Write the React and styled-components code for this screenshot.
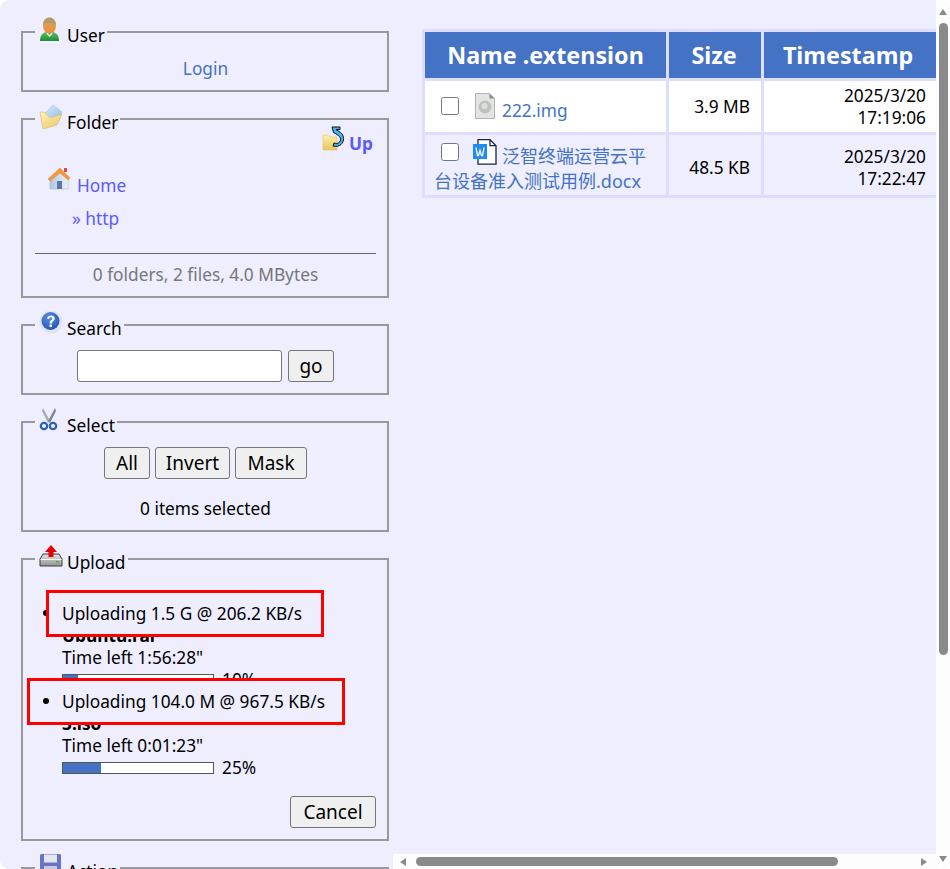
import React from "react";
import styled, { createGlobalStyle } from "styled-components";

const GlobalStyle = createGlobalStyle`
  html, body {
    margin: 0;
    padding: 0;
    height: 869px;
    overflow: hidden;
    background: #ffffff;
  }
  body {
    font-family: "Noto Sans", "Noto Sans CJK SC", sans-serif;
    font-size: 17.3px;
    color: #000;
  }
`;

const Shell = styled.div`
  width: 950px;
  height: 869px;
  display: flex;
  overflow: hidden;
  border-radius: 9px;
  background: #eeeeff;
`;

const Sidebar = styled.div`
  width: 368px;
  height: 869px;
  padding: 21px 4px 0 21px;
  box-sizing: content-box;
  flex: none;
  display: flex;
  flex-direction: column;
  gap: 16px;
  overflow: hidden;
`;

const Panel = styled.fieldset`
  margin: 0;
  padding: ${(p) => p.$pad || "14px 11px 11px 12px"};
  border: 2px solid #999999;
  min-width: 0;
  flex: none;
  box-sizing: border-box;
  width: 368px;
  text-align: center;
  line-height: 22px;
`;

const Legend = styled.legend`
  margin-left: 0;
  padding: 0 2px 0 4px;
  height: 22px;
  line-height: 22px;
  display: flex;
  align-items: flex-start;
  gap: 8px;
  text-align: left;
`;

const LegendLabel = styled.span`
  margin-top: 4px;
`;

const LegendIcon = styled.span`
  width: 20px;
  height: 24px;
  margin-top: -4px;
  display: block;
  svg {
    display: block;
  }
`;

const Link = styled.a`
  color: ${(p) => p.$color || "#4472c4"};
  font-weight: ${(p) => (p.$bold ? 700 : 400)};
  font-size: ${(p) => p.$size || "inherit"};
  text-decoration: none;
`;

const UpRow = styled.div`
  height: 30px;
  margin-top: -16px;
  padding-right: 3px;
  display: flex;
  justify-content: flex-end;
  align-items: flex-start;
  gap: 3px;
`;

const UpLink = styled(Link)`
  margin-top: 7px;
`;

const Crumbs = styled.div`
  margin-top: 16px;
  padding-left: 12px;
  text-align: left;
`;

const HomeRow = styled.div`
  height: 24px;
  display: flex;
  gap: 6px;
  align-items: flex-end;
  line-height: 20px;
`;

const HomeIconBox = styled.span`
  align-self: flex-start;
  margin-top: -5px;
  height: 24px;
`;

const SubCrumb = styled.div`
  margin-top: 12px;
  padding-left: 25px;
  height: 22px;
`;

const Rule = styled.hr`
  margin: 23px 0 0 0;
  border: 0;
  height: 1px;
  background: #666666;
`;

const Summary = styled.div`
  margin-top: 10px;
  color: #777777;
`;

const Row = styled.div`
  display: flex;
  justify-content: center;
  gap: ${(p) => p.$gap || "6px"};
`;

const SearchInput = styled.input`
  width: 205px;
  height: 32px;
  box-sizing: border-box;
  border: 1px solid #767676;
  border-radius: 3px;
  background: #fff;
`;

const Button = styled.button`
  height: 32px;
  width: ${(p) => p.$w}px;
  padding: 0;
  box-sizing: border-box;
  border: 1px solid #767676;
  border-radius: 3px;
  background: #efefef;
  color: #000;
  font: inherit;
  font-size: 19px;
`;

const Selected = styled.div`
  margin-top: 19px;
  margin-bottom: -1px;
`;

const UploadList = styled.ul`
  margin: 0;
  padding: 19px 0 0 27px;
  list-style: none;
  text-align: left;
`;

const Upload = styled.li`
  display: block;
`;

const FirstLine = styled.div`
  position: relative;
  height: 22px;
`;

const Bullet = styled.span`
  position: absolute;
  left: -19px;
  top: 7px;
  width: 6px;
  height: 6px;
  border-radius: 50%;
  background: #000;
  z-index: ${(p) => (p.$over ? 2 : 0)};
`;

const RedBox = styled.div`
  position: absolute;
  left: ${(p) => p.$left}px;
  top: -13px;
  width: ${(p) => p.$w}px;
  height: 47px;
  box-sizing: border-box;
  border: 3px solid #ff0000;
  background: #eeeeff;
  z-index: 1;
`;

const LineText = styled.span`
  position: relative;
  z-index: 2;
`;

const FileName = styled.div`
  font-weight: 700;
  height: 22px;
`;

const TimeLeft = styled.div`
  height: 22px;
`;

const BarRow = styled.div`
  height: 22px;
  display: flex;
  align-items: center;
  gap: 8px;
`;

const Bar = styled.div`
  width: 152px;
  height: 12px;
  margin-top: -1px;
  box-sizing: border-box;
  border: 1px solid #555555;
  background: #ffffff;
`;

const BarFill = styled.div`
  height: 100%;
  background: #4472c4;
`;

const CancelRow = styled.div`
  margin-top: 17px;
  display: flex;
  justify-content: flex-end;
`;

const Main = styled.div`
  flex: 1;
  min-width: 0;
  display: grid;
  grid-template-columns: 543px 14px;
  grid-template-rows: 854px 15px;
`;

const TableArea = styled.div`
  overflow: hidden;
  padding: 29px 0 0 29px;
`;

const FileTable = styled.table`
  border-collapse: separate;
  border-spacing: 3px;
  background: #ddddff;
  table-layout: fixed;
  width: 517px;
`;

const HeadCell = styled.th`
  box-sizing: border-box;
  height: 46px;
  padding: 0 ${(p) => p.$pr || 0}px 0 0;
  background: #4472c4;
  color: #ffffff;
  font-size: 23.3px;
  font-weight: 700;
  text-align: center;
  width: ${(p) => p.$w}px;
`;

const NameCell = styled.td`
  padding: 4px 8px 1px 9px;
  background: ${(p) => (p.$alt ? "#eeeeff" : "#ffffff")};
  line-height: 24px;
`;

const ValueCell = styled.td`
  padding: ${(p) => (p.$alt ? "6px" : "4px")} ${(p) => p.$pr}px ${(p) => (p.$alt ? "1px" : "3px")} 0;
  background: ${(p) => (p.$alt ? "#eeeeff" : "#ffffff")};
  text-align: right;
  line-height: 22px;
  vertical-align: middle;
`;

const Check = styled.input`
  width: 18px;
  height: 18px;
  margin: 0 14px 0 7px;
  vertical-align: 2px;
`;

const FileIcon = styled.span`
  display: inline-block;
  width: 24px;
  height: 26px;
  margin-right: 5px;
  vertical-align: -2px;
  svg {
    display: block;
  }
`;

const Track = styled.div`
  background: #fdfdfd;
  display: flex;
  flex-direction: ${(p) => (p.$vertical ? "column" : "row")};
  align-items: center;
`;

const Thumb = styled.div`
  background: #8a8a8a;
  border-radius: 5px;
  flex: none;
  width: ${(p) => (p.$vertical ? "9px" : `${p.$size}px`)};
  height: ${(p) => (p.$vertical ? `${p.$size}px` : "9px")};
  margin: ${(p) => p.$margin};
`;

const Arrow = styled.div`
  flex: none;
  width: 0;
  height: 0;
  margin: ${(p) => p.$margin || 0};
  border-style: solid;
  border-color: transparent;
  border-width: ${(p) => (p.$dir === "up" || p.$dir === "down" ? "0 4.5px" : "4.5px 0")};
  ${(p) => p.$dir === "up" && "border-bottom: 6px solid #8a8a8a;"}
  ${(p) => p.$dir === "down" && "border-top: 6px solid #8a8a8a;"}
  ${(p) => p.$dir === "left" && "border-right: 6px solid #8a8a8a;"}
  ${(p) => p.$dir === "right" && "border-left: 6px solid #8a8a8a;"}
`;

const UserIcon = () => (
  <svg width="21" height="25" viewBox="0 0 21 25">
    <defs>
      <linearGradient id="skin" x1="0" y1="0" x2="0" y2="1">
        <stop offset="0" stopColor="#c9a878" />
        <stop offset="1" stopColor="#f78a2c" />
      </linearGradient>
      <linearGradient id="suit" x1="0" y1="0" x2="0" y2="1">
        <stop offset="0" stopColor="#5cc06a" />
        <stop offset="1" stopColor="#1f8a35" />
      </linearGradient>
    </defs>
    <path d="M1 24c0-5 2-8 6-9h7c4 1 6 4 6 9z" fill="url(#suit)" />
    <path d="M8 15l2.500 3 2.500-3 .5 2-3 3-3-3z" fill="#d7efd8" />
    <ellipse cx="10.500" cy="9" rx="6.500" ry="7.500" fill="url(#skin)" />
    <path d="M4 8c0-5 3-7.500 6.500-7.500S17 3 17 8c-2-2-10-3-13 0z" fill="#b59a62" />
  </svg>
);

const FolderOpenIcon = () => (
  <svg width="24" height="26" viewBox="0 0 24 26">
    <defs>
      <linearGradient id="sheet" x1="0" y1="0" x2="1" y2="1">
        <stop offset="0" stopColor="#d8ecfa" />
        <stop offset="1" stopColor="#8fbde0" />
      </linearGradient>
      <linearGradient id="flap" x1="0" y1="0" x2="1" y2="1">
        <stop offset="0" stopColor="#fff3b8" />
        <stop offset="1" stopColor="#e8c468" />
      </linearGradient>
    </defs>
    <path d="M5 10L14 1l9 7-3 9z" fill="url(#sheet)" stroke="#a9c6dc" strokeWidth=".6" />
    <path d="M1 8l4 0 6 6 12-4-5 11-14 4z" fill="url(#flap)" stroke="#d8b868" strokeWidth=".6" />
  </svg>
);

const UpIcon = () => (
  <svg width="24" height="25" viewBox="0 0 24 25">
    <defs>
      <linearGradient id="upfolder" x1="0" y1="0" x2="0" y2="1">
        <stop offset="0" stopColor="#fff0a8" />
        <stop offset="1" stopColor="#e6c65e" />
      </linearGradient>
    </defs>
    <path d="M1 9h5l2 2h7v13H1z" fill="url(#upfolder)" stroke="#dcc06a" strokeWidth=".6" />
    <path
      d="M10 1h8v2.500h-4l4.500 3c4 3 4 9 .5 12-2 1.800-5 2.300-8 1.500l1-3c3 1 6 .3 6.500-3 .5-2.800-1.500-4.500-7-7.500z"
      fill="#44b4e8"
      stroke="#0c0c20"
      strokeWidth="1"
    />
  </svg>
);

const HomeIcon = () => (
  <svg width="24" height="24" viewBox="0 0 24 24">
    <defs>
      <linearGradient id="wall" x1="0" y1="0" x2="1" y2="0">
        <stop offset="0" stopColor="#a9c8e2" />
        <stop offset="1" stopColor="#eef3f8" />
      </linearGradient>
    </defs>
    <path d="M3 11l10-7 8 8v10H3z" fill="url(#wall)" stroke="#a7bccf" strokeWidth=".6" />
    <path d="M1 12L13 1l10 10-2 2-8-7-10 8z" fill="#f6973c" stroke="#e9852c" strokeWidth=".5" />
    <rect x="17" y="1" width="3" height="4" fill="#d9504a" />
    <rect x="10" y="14" width="5" height="8" fill="#5b78a8" />
  </svg>
);

const HelpIcon = () => (
  <svg width="24" height="24" viewBox="0 0 24 24">
    <defs>
      <radialGradient id="orb" cx=".4" cy=".3" r=".8">
        <stop offset="0" stopColor="#5c8fe0" />
        <stop offset="1" stopColor="#1d4fb4" />
      </radialGradient>
    </defs>
    <circle cx="12" cy="12" r="11.500" fill="#dfe4ee" />
    <circle cx="11.500" cy="11" r="9" fill="url(#orb)" />
    <path
      d="M8 8.500c.5-2 2-3 4-3s3.700 1.200 3.700 3c0 2.700-2.700 2.600-2.700 5h-2.400c0-3.300 2.600-3.300 2.600-5 0-.8-.6-1.200-1.300-1.200-1 0-1.400.6-1.700 1.500z"
      fill="#fff"
    />
    <rect x="10.500" y="14.500" width="2.500" height="2.500" fill="#fff" />
  </svg>
);

const ScissorsIcon = () => (
  <svg width="20" height="24" viewBox="0 0 20 24">
    <path d="M4 1l7 13-2 2L3 4z" fill="#a7adb8" />
    <path d="M16 1L9 14l2 2 6-12z" fill="#7f8793" />
    <circle cx="5" cy="19" r="3.200" fill="none" stroke="#2a62b8" strokeWidth="2.200" />
    <circle cx="14" cy="19" r="3.200" fill="none" stroke="#2a62b8" strokeWidth="2.200" />
  </svg>
);

const UploadIcon = () => (
  <svg width="24" height="24" viewBox="0 0 24 24">
    <defs>
      <linearGradient id="drive" x1="0" y1="0" x2="0" y2="1">
        <stop offset="0" stopColor="#e4e6e4" />
        <stop offset="1" stopColor="#8e9490" />
      </linearGradient>
    </defs>
    <path d="M1 15l3-5h16l3 5v7H1z" fill="url(#drive)" stroke="#3c3c3c" strokeWidth="1" />
    <path d="M1.500 15.500h21" stroke="#f4f4f4" strokeWidth="1" />
    <rect x="17" y="17" width="3" height="1.500" fill="#3fae4a" />
    <path d="M12 1l6 7h-3.500v5h-5V8H6z" fill="#e60000" />
  </svg>
);

const SaveIcon = () => (
  <svg width="24" height="24" viewBox="0 0 24 24">
    <rect x="1" y="1" width="21" height="21" rx="1.500" fill="#6a72c8" />
    <rect x="5" y="1.500" width="13" height="8" fill="#e4e6ee" />
    <rect x="5" y="13" width="13" height="9" fill="#c9cbd6" />
  </svg>
);

const DiscIcon = () => (
  <svg width="24" height="26" viewBox="0 0 24 26">
    <path d="M2.500 .5h14l5 5v20h-19z" fill="#e4e4e4" stroke="#b2b2b2" />
    <path d="M16.500 .5v5h5z" fill="#8c8c8c" />
    <circle cx="12" cy="14" r="6.500" fill="#bdc2bd" />
    <circle cx="11.500" cy="13" r="3" fill="#dcdfdc" />
  </svg>
);

const WordIcon = () => (
  <svg width="24" height="26" viewBox="0 0 24 26">
    <path d="M5 .7h12l6 6v18.500H5z" fill="#ffffff" stroke="#1a2540" strokeWidth="1.300" />
    <path d="M17 .7v6h6" fill="none" stroke="#1a2540" strokeWidth="1.300" />
    <rect x="0" y="5" width="14" height="15" fill="#1e8cf0" />
    <path d="M3 8.500l1.500 8h1l1.500-5 1.500 5h1l1.500-8" fill="none" stroke="#ffffff" strokeWidth="1.300" />
  </svg>
);

const uploads = [
  { line: "Uploading 1.5 G @ 206.2 KB/s", name: "Ubuntu.rar", left: "1:56:28", pct: 10, box: { left: -16, w: 278 } },
  { line: "Uploading 104.0 M @ 967.5 KB/s", name: "3.iso", left: "0:01:23", pct: 25, box: { left: -35, w: 318 }, over: true },
];

const App = () => (
  <Shell>
    <GlobalStyle />
    <Sidebar>
      <Panel $pad="15px 11px 10px 12px">
        <Legend>
          <LegendIcon>
            <UserIcon />
          </LegendIcon>
          <LegendLabel>User</LegendLabel>
        </Legend>
        <Link href="#">Login</Link>
      </Panel>

      <Panel $pad="12px 11px 10px 12px">
        <Legend>
          <LegendIcon>
            <FolderOpenIcon />
          </LegendIcon>
          <LegendLabel>Folder</LegendLabel>
        </Legend>
        <UpRow>
          <UpIcon />
          <UpLink href="#" $color="#5a5aff" $bold>
            Up
          </UpLink>
        </UpRow>
        <Crumbs>
          <HomeRow>
            <HomeIconBox>
              <HomeIcon />
            </HomeIconBox>
            <Link href="#" $color="#5a5aff">
              Home
            </Link>
          </HomeRow>
          <SubCrumb>
            <Link href="#" $color="#5a5aff">
              » http
            </Link>
          </SubCrumb>
        </Crumbs>
        <Rule />
        <Summary>0 folders, 2 files, 4.0 MBytes</Summary>
      </Panel>

      <Panel>
        <Legend>
          <LegendIcon>
            <HelpIcon />
          </LegendIcon>
          <LegendLabel>Search</LegendLabel>
        </Legend>
        <Row>
          <SearchInput />
          <Button $w={46}>go</Button>
        </Row>
      </Panel>

      <Panel>
        <Legend>
          <LegendIcon>
            <ScissorsIcon />
          </LegendIcon>
          <LegendLabel>Select</LegendLabel>
        </Legend>
        <Row $gap="5px">
          <Button $w={46}>All</Button>
          <Button $w={75}>Invert</Button>
          <Button $w={72}>Mask</Button>
        </Row>
        <Selected>0 items selected</Selected>
      </Panel>

      <Panel>
        <Legend>
          <LegendIcon>
            <UploadIcon />
          </LegendIcon>
          <LegendLabel>Upload</LegendLabel>
        </Legend>
        <UploadList>
          {uploads.map((u) => (
            <Upload key={u.name}>
              <FirstLine>
                <Bullet $over={u.over} />
                <RedBox $left={u.box.left} $w={u.box.w} />
                <LineText>{u.line}</LineText>
              </FirstLine>
              <FileName>{u.name}</FileName>
              <TimeLeft>Time left {u.left}"</TimeLeft>
              <BarRow>
                <Bar>
                  <BarFill style={{ width: `${u.pct}%` }} />
                </Bar>
                {u.pct}%
              </BarRow>
            </Upload>
          ))}
        </UploadList>
        <CancelRow>
          <Button $w={86}>Cancel</Button>
        </CancelRow>
      </Panel>

      <Panel>
        <Legend>
          <LegendIcon>
            <SaveIcon />
          </LegendIcon>
          <LegendLabel>Action</LegendLabel>
        </Legend>
      </Panel>
    </Sidebar>

    <Main>
      <TableArea>
        <FileTable>
          <thead>
            <tr>
              <HeadCell $w={241}>Name .extension</HeadCell>
              <HeadCell $w={92} $pr={2}>
                Size
              </HeadCell>
              <HeadCell $w={172} $pr={4}>
                Timestamp
              </HeadCell>
            </tr>
          </thead>
          <tbody>
            <tr>
              <NameCell>
                <Check type="checkbox" />
                <FileIcon>
                  <DiscIcon />
                </FileIcon>
                <Link href="#">222.img</Link>
              </NameCell>
              <ValueCell $pr={11}>3.9 MB</ValueCell>
              <ValueCell $pr={10}>
                2025/3/20
                <br />
                17:19:06
              </ValueCell>
            </tr>
            <tr>
              <NameCell $alt>
                <Check type="checkbox" />
                <FileIcon>
                  <WordIcon />
                </FileIcon>
                <Link href="#" $size="18px">
                  泛智终端运营云平台设备准入测试用例.docx
                </Link>
              </NameCell>
              <ValueCell $alt $pr={11}>
                48.5 KB
              </ValueCell>
              <ValueCell $alt $pr={10}>
                2025/3/20
                <br />
                17:22:47
              </ValueCell>
            </tr>
          </tbody>
        </FileTable>
      </TableArea>

      <Track $vertical>
        <Arrow $dir="up" $margin="9px 0 8px" />
        <Thumb $vertical $size={632} />
      </Track>

      <Track>
        <Arrow $dir="left" $margin="0 0 0 7px" />
        <Thumb $size={422} $margin="0 0 0 10px" />
        <Arrow $dir="right" $margin="0 0 0 83px" />
      </Track>

      <Track $vertical>
        <Arrow $dir="down" $margin="2px 0 0" />
      </Track>
    </Main>
  </Shell>
);

export default App;
